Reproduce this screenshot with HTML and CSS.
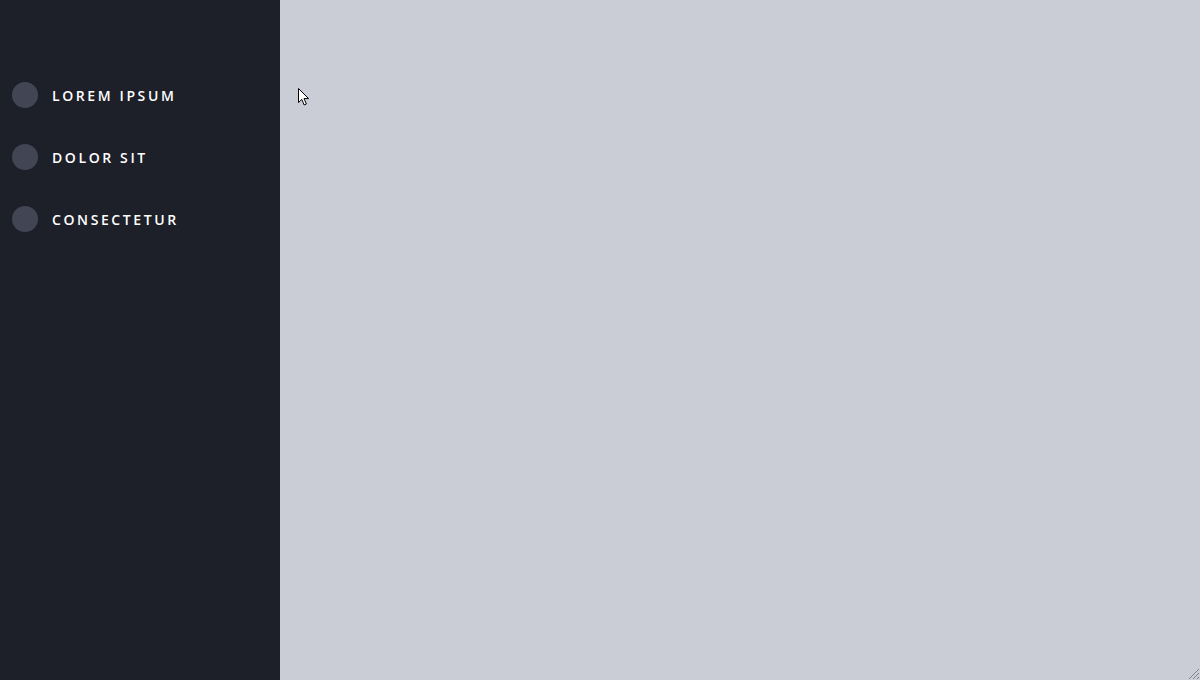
FILE: index.html
```html
<!DOCTYPE html>
<html>
<head>
<meta charset="utf-8">
<link rel="stylesheet" href="styles.css">
</head>
<body>
<div class="app">
  <nav class="sidebar">
    <a class="item"><span class="dot"></span><span class="label">LOREM IPSUM</span></a>
    <a class="item"><span class="dot"></span><span class="label">DOLOR SIT</span></a>
    <a class="item"><span class="dot"></span><span class="label">CONSECTETUR</span></a>
  </nav>
  <main class="content">
    <svg class="cursor" width="14" height="20" viewBox="0 0 14 20"><path d="M1.5 1.5 L1.5 15.5 L4.8 12.4 L7.2 18 L9.4 17 L7 11.6 L11.6 11.6 Z" fill="#fff" stroke="#000" stroke-width="1" stroke-linejoin="round"/></svg>
    <svg class="grip" width="13" height="13" viewBox="0 0 13 13"><path d="M12 2 L2 12 M12 6 L6 12 M12 10 L10 12" stroke="#7d808a" stroke-width="1"/></svg>
  </main>
</div>
</body>
</html>
```
FILE: styles.css
```css
html, body { margin: 0; padding: 0; height: 100%; }
body { font-family: "Open Sans", "Liberation Sans", sans-serif; }
.app { display: flex; height: 680px; }
.sidebar {
  width: 280px; flex: none; background: #1e2029;
  display: flex; flex-direction: column; gap: 36px;
  padding: 82px 0 0 12px; box-sizing: border-box;
}
.item { display: flex; align-items: flex-start; gap: 14px; height: 26px; text-decoration: none; }
.dot { width: 26px; height: 26px; border-radius: 50%; background: #414554; flex: none; }
.label { color: #fff; font-size: 14px; font-weight: 600; letter-spacing: 2.6px; line-height: 25px; padding-top: 1px; }
.content { flex: 1; background: #cacdd6; position: relative; }
.cursor { position: absolute; left: 17px; top: 87px; }
.grip { position: absolute; right: 0; bottom: 0; }
```
